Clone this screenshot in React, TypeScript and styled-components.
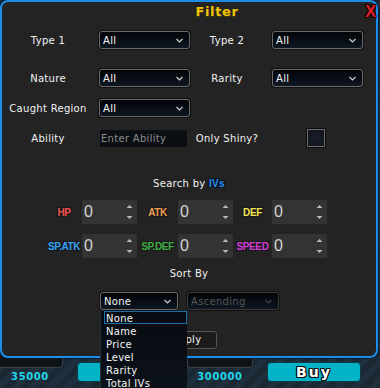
import React from "react";
import styled, { createGlobalStyle } from "styled-components";

const GlobalStyle = createGlobalStyle`
  html, body {
    margin: 0;
    padding: 0;
    background: #1b2a35;
  }
  body {
    font-family: "DejaVu Sans", sans-serif;
  }
`;

const outline = (c: string) =>
  `1px 0 0 ${c}, -1px 0 0 ${c}, 0 1px 0 ${c}, 0 -1px 0 ${c}, 1px 1px 0 ${c}, -1px -1px 0 ${c}, 1px -1px 0 ${c}, -1px 1px 0 ${c}`;

const Stage = styled.div`
  position: relative;
  width: 380px;
  height: 388px;
  overflow: hidden;
  display: flex;
  flex-direction: column;
  justify-content: flex-end;
  background: repeating-linear-gradient(
    135deg,
    #1a2833 0 6px,
    #1f2f3b 6px 12px
  );
`;

// store page behind the dialog
const StoreRow = styled.div`
  display: flex;
  gap: 16px;
  margin-left: -3px;
  padding-bottom: 6px;
`;

const StoreItem = styled.div`
  display: flex;
  gap: 14px;
`;

const ItemInfo = styled.div`
  display: flex;
  flex-direction: column;
  width: 66px;
`;

const ItemCard = styled.div`
  height: 40px;
  background: #0e1317;
  border: 1px solid #3c4348;
  border-radius: 4px;
  box-sizing: border-box;
`;

const Price = styled.div`
  height: 14px;
  line-height: 17px;
  text-align: center;
  color: #22d6ec;
  font-size: 10px;
  font-weight: bold;
  letter-spacing: 0.6px;
`;

const BuyButton = styled.div`
  align-self: flex-end;
  width: 94px;
  height: 20px;
  box-sizing: border-box;
  background: #00b3c7;
  border: 1px solid #0b3c46;
  border-radius: 4px;
  color: #fff;
  font-family: "DejaVu Sans", sans-serif;
  font-weight: bold;
  font-size: 14px;
  letter-spacing: 2px;
  text-align: center;
  line-height: 19px;
  text-shadow: ${outline("#111")};
`;

// dialog
const Modal = styled.div`
  position: absolute;
  top: 0;
  left: 0;
  width: 378px;
  height: 358px;
  box-sizing: border-box;
  background: #232323;
  border: 2px solid #1c8de6;
  border-radius: 8px;
  box-shadow: 0 0 0 1px #0b1a28;
  display: flex;
  flex-direction: column;
  color: #f2f2f2;
  font-size: 10px;
`;

const TitleBar = styled.div`
  height: 22px;
  box-sizing: border-box;
  display: flex;
  align-items: center;
  justify-content: center;
  padding: 0 0 4px 56px;
`;

const Title = styled.div`
  color: #f0c20a;
  font-size: 13px;
  font-weight: bold;
  letter-spacing: 0.6px;
  text-shadow: 0 1px 0 #4a3a00;
`;

const Close = styled.div`
  position: absolute;
  top: 1px;
  right: 0;
  color: #e4222a;
  font-family: "Liberation Sans", sans-serif;
  font-weight: bold;
  font-size: 16px;
  text-shadow: ${outline("#1a0000")};
`;

const FormRow = styled.div<{ $top: number }>`
  display: grid;
  grid-template-columns: 84px 100px 74px 99px;
  margin-top: ${(p) => p.$top}px;
  padding-left: 4px;
  height: 18px;
  align-items: center;
  & > :nth-child(2n) {
    justify-self: end;
  }
`;

const Label = styled.div`
  text-align: center;
  white-space: nowrap;
  letter-spacing: 0.3px;
`;

const SelectBox = styled.div<{ $width?: number; $disabled?: boolean }>`
  width: ${(p) => p.$width ?? 91}px;
  height: 18px;
  box-sizing: border-box;
  display: flex;
  align-items: center;
  justify-content: space-between;
  padding: 0 6px 0 3px;
  border: 1px solid ${(p) => (p.$disabled ? "#3a3a3a" : "#6a6a6a")};
  border-radius: 3px;
  box-shadow: 0 0 0 1px #111;
  background: linear-gradient(180deg, #020408, #0e1722);
  color: ${(p) => (p.$disabled ? "#555" : "#f4f4f4")};
  letter-spacing: 0.3px;
  & svg {
    stroke: ${(p) => (p.$disabled ? "#4a4a4a" : "#cfcfcf")};
  }
`;

const Chevron = () => (
  <svg width="7" height="5" viewBox="0 0 7 5" fill="none" strokeWidth="1.2">
    <path d="M0.5 1 L3.5 4 L6.5 1" />
  </svg>
);

const Select: React.FC<{ value: string; width?: number; disabled?: boolean }> = ({
  value,
  width,
  disabled,
}) => (
  <SelectBox $width={width} $disabled={disabled}>
    <span>{value}</span>
    <Chevron />
  </SelectBox>
);

const TextBox = styled.div`
  width: 87px;
  height: 17px;
  margin-right: 3px;
  box-sizing: border-box;
  background: #0b0e13;
  color: #8c8c8c;
  padding-left: 1px;
  line-height: 17px;
  letter-spacing: 0.3px;
`;

const CheckBox = styled.div`
  margin-right: 38px;
  width: 18px;
  height: 18px;
  box-sizing: border-box;
  border: 1px solid #6e6e6e;
  box-shadow: 0 0 0 1px #0c0c0c;
  background: radial-gradient(#1a1e2c, #111420);
`;

const SectionTitle = styled.div<{ $top: number }>`
  margin-top: ${(p) => p.$top}px;
  height: 14px;
  line-height: 14px;
  text-align: center;
  letter-spacing: 0.3px;
`;

const IvWord = styled.span`
  color: #2e8fe8;
  font-weight: bold;
  font-family: "Liberation Sans", sans-serif;
  text-shadow: ${outline("#081428")};
`;

const IvGrid = styled.div`
  display: grid;
  grid-template-columns: 36px 55px 41px 55px 39px 55px;
  grid-auto-rows: 24px;
  row-gap: 10px;
  margin-top: 9px;
  padding-left: 44px;
  align-items: center;
`;

const IvLabel = styled.div<{ $color: string }>`
  text-align: center;
  font-family: "Liberation Sans", sans-serif;
  font-weight: bold;
  font-size: 10px;
  letter-spacing: -0.4px;
  color: ${(p) => p.$color};
  text-shadow: ${outline("#1a1a1a")};
`;

const NumberBox = styled.div`
  height: 24px;
  background: #333333;
  display: flex;
  align-items: center;
  justify-content: space-between;
  padding: 0 4px 0 2px;
  font-family: "Liberation Sans", sans-serif;
  font-size: 16px;
  color: #d4d4d4;
`;

const Spinner = () => (
  <svg width="7" height="16" viewBox="0 0 7 16" fill="#b8b8b8">
    <path d="M0.5 4 L3.5 1 L6.5 4 Z" />
    <path d="M0.5 12 L3.5 15 L6.5 12 Z" />
  </svg>
);

const SortRow = styled.div`
  display: flex;
  justify-content: center;
  gap: 9px;
  margin-top: 11px;
  padding-left: 1px;
`;

const SortWrap = styled.div`
  position: relative;
`;

const OptionList = styled.div`
  position: absolute;
  top: 19px;
  left: 0;
  width: 87px;
  z-index: 2;
  box-sizing: border-box;
  padding: 0 0 0 3px;
  background: linear-gradient(180deg, #070b11, #0c1219);
  border-left: 1px solid #2a2f35;
`;

const Option = styled.div<{ $active?: boolean }>`
  height: 13px;
  line-height: 13px;
  box-sizing: border-box;
  padding-left: 1px;
  border: 1px solid ${(p) => (p.$active ? "#1b6ea8" : "transparent")};
  letter-spacing: 0.3px;
  color: #f4f4f4;
`;

const ApplyRow = styled.div`
  display: flex;
  justify-content: center;
  margin-top: 21px;
  padding-right: 5px;
`;

const ApplyButton = styled.div`
  width: 60px;
  height: 18px;
  box-sizing: border-box;
  border: 1px solid #555;
  border-radius: 3px;
  background: #1b1b1b;
  text-align: center;
  line-height: 16px;
  letter-spacing: 0.3px;
`;

const ivs = [
  { name: "HP", color: "#f25454" },
  { name: "ATK", color: "#f2a055" },
  { name: "DEF", color: "#f2e454" },
  { name: "SP.ATK", color: "#35a2f4" },
  { name: "SP.DEF", color: "#3fae45" },
  { name: "SPEED", color: "#d33ed8" },
];

const sortOptions = ["None", "Name", "Price", "Level", "Rarity", "Total IVs"];

export default function App() {
  return (
    <>
      <GlobalStyle />
      <Stage>
        <StoreRow>
          <StoreItem>
            <ItemInfo>
              <ItemCard />
              <Price>35000</Price>
            </ItemInfo>
            {/* label hidden under the open dropdown */}
            <BuyButton />
          </StoreItem>
          <StoreItem>
            <ItemInfo>
              <ItemCard />
              <Price>300000</Price>
            </ItemInfo>
            <BuyButton>Buy</BuyButton>
          </StoreItem>
        </StoreRow>

        <Modal>
          <TitleBar>
            <Title>Filter</Title>
          </TitleBar>
          <Close>X</Close>

          <FormRow $top={7}>
            <Label>Type 1</Label>
            <Select value="All" />
            <Label>Type 2</Label>
            <Select value="All" />
          </FormRow>
          <FormRow $top={20}>
            <Label>Nature</Label>
            <Select value="All" />
            <Label>Rarity</Label>
            <Select value="All" />
          </FormRow>
          <FormRow $top={12}>
            <Label>Caught Region</Label>
            <Select value="All" />
          </FormRow>
          <FormRow $top={12}>
            <Label>Ability</Label>
            <TextBox>Enter Ability</TextBox>
            <Label>Only Shiny?</Label>
            <CheckBox />
          </FormRow>

          <SectionTitle $top={30}>
            Search by <IvWord>IVs</IvWord>
          </SectionTitle>
          <IvGrid>
            {ivs.map((iv) => (
              <React.Fragment key={iv.name}>
                <IvLabel $color={iv.color}>{iv.name}</IvLabel>
                <NumberBox>
                  <span>0</span>
                  <Spinner />
                </NumberBox>
              </React.Fragment>
            ))}
          </IvGrid>

          <SectionTitle $top={9}>Sort By</SectionTitle>
          <SortRow>
            <SortWrap>
              <Select value="None" width={78} />
              <OptionList>
                {sortOptions.map((o, i) => (
                  <Option key={o} $active={i === 0}>
                    {o}
                  </Option>
                ))}
              </OptionList>
            </SortWrap>
            <Select value="Ascending" width={92} disabled />
          </SortRow>

          <ApplyRow>
            <ApplyButton>Apply</ApplyButton>
          </ApplyRow>
        </Modal>
      </Stage>
    </>
  );
}
